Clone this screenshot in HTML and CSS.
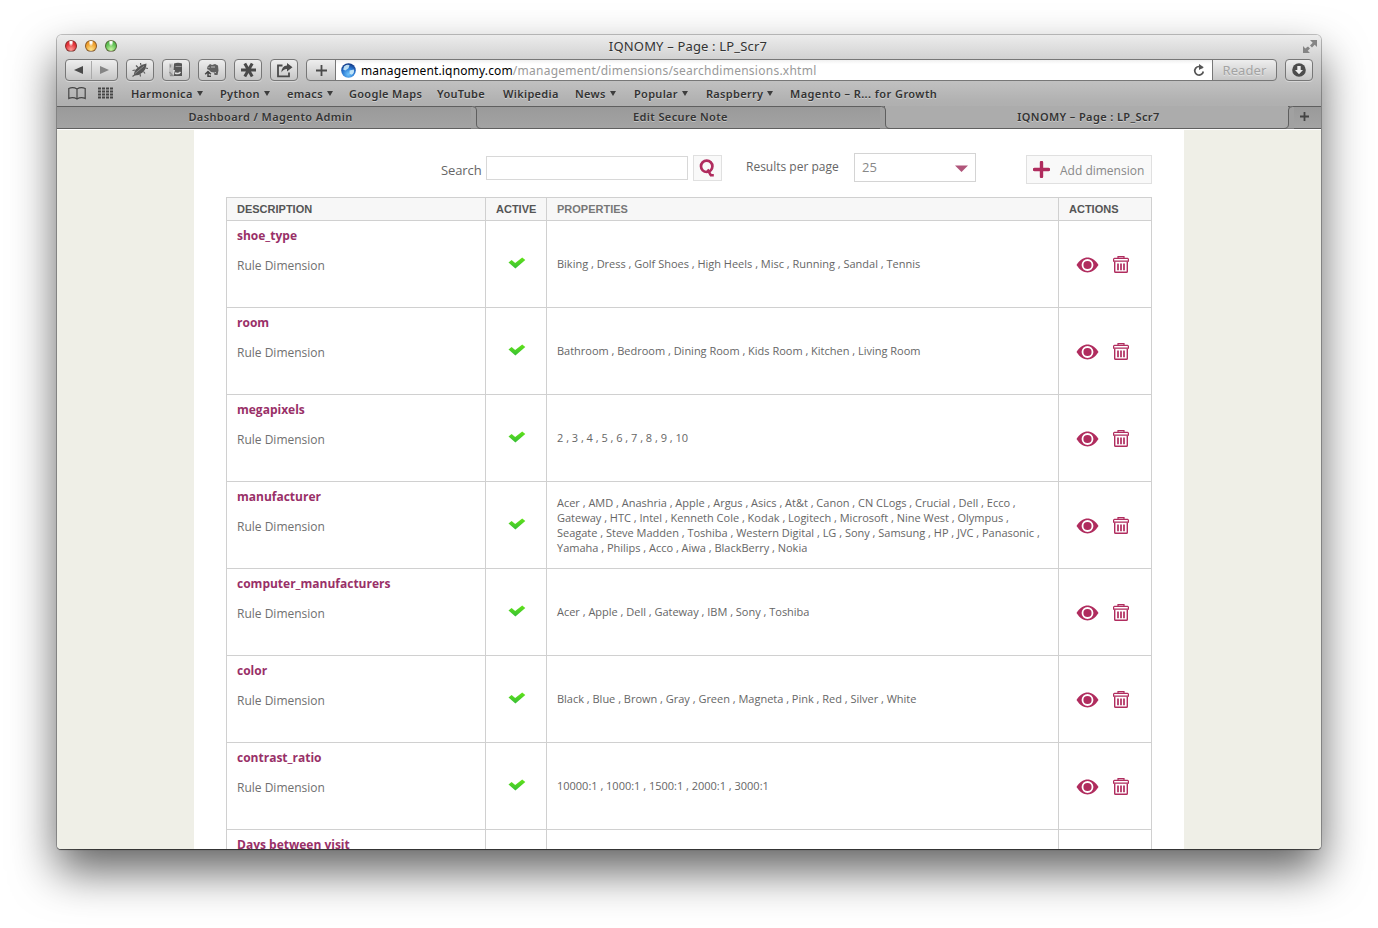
FILE: index.html
```
<!DOCTYPE html>
<html lang="en">
<head>
<meta charset="utf-8">
<title>IQNOMY – Page : LP_Scr7</title>
<link rel="stylesheet" href="styles.css">
</head>
<body>
<svg class="defs" width="0" height="0">
  <defs>
    <linearGradient id="tick-fill" x1="0" y1="0" x2="0" y2="1"><stop offset="0" stop-color="#62e417"/><stop offset="1" stop-color="#36bd38"/></linearGradient>
    <radialGradient id="globe-fill" cx=".5" cy=".75" r=".7"><stop offset="0" stop-color="#6fc4fb"/><stop offset=".6" stop-color="#2a78d2"/><stop offset="1" stop-color="#123b8a"/></radialGradient>
  </defs>
  <symbol id="tick" viewBox="0 0 18 12"><path d="M.5 5.6 3.6 3 7.2 6 14.2.6 17.3 3 7.4 11.6Z" fill="url(#tick-fill)"/></symbol>
  <symbol id="eye" viewBox="0 0 23 16"><path d="M.5 8C4 2.6 7.6.6 11.5.6S19 2.6 22.5 8C19 13.4 15.4 15.4 11.5 15.4S4 13.4.5 8Z" fill="#b02c5e"/><circle cx="11.5" cy="8" r="5" fill="none" stroke="#fff" stroke-width="1.8"/></symbol>
  <symbol id="bin" viewBox="0 0 16 17"><g fill="none" stroke="#b02c5e"><path d="M5 2.2V.7h6v1.5M.6 5.2V3.1L1.5 2.4h13l.9.7v2.1Z" stroke-width="1.2"/><path d="M1.7 5.4V15.4q0 .9.9.9h10.800q.9 0 .9-.9V5.4" stroke-width="1.4"/><path d="M5 7.500v6.700M8 7.500v6.700M11 7.500v6.700" stroke-width="1.700"/></g></symbol>
  <symbol id="edge" viewBox="0 0 12 23"><path d="M0 0H2Q5.500 0 5.500 4V18Q5.500 22.500 10 22.500H0Z" fill="#a1a1a1"/><path d="M0 .5H1.500Q5.500.5 5.500 4V18Q5.500 22.500 10 22.500" fill="none" stroke="#5f5f5f"/></symbol>
</svg>
<div class="window">
  <header class="chrome">
    <div class="titlebar">
      <div class="lights"><i class="light red"></i><i class="light amber"></i><i class="light green"></i></div>
      <div class="title">IQNOMY – Page : LP_Scr7</div>
      <svg class="full" width="16" height="15" viewBox="0 0 16 15" fill="#858585"><path d="M8 1h7v7l-2.300-2.300-2.700 2.700-2-2 2.700-2.700ZM1 14h7L5.700 11.700 8 9.400 6 7.400 3.300 9.600 1 7Z"/></svg>
    </div>
    <div class="toolbar">
      <div class="btn nav"><span><svg width="9" height="8" viewBox="0 0 9 8"><path d="M9 0v8L0 4Z" fill="#4a4a4a"/></svg></span><span><svg width="9" height="8" viewBox="0 0 9 8"><path d="M0 0v8l9-4Z" fill="#858585"/></svg></span></div>
      <div class="btn"><svg width="18" height="16" viewBox="0 0 18 16"><path d="M3 13.500Q2.500 9 7 5.500 11 2 15.500 1.500 15.500 7 11.500 10.500 7.500 14 3 13.500Z" fill="#565656"/><path d="M4.500 8 1.500 8.500M7 5.500 5 3.500M10 3.500 9.500 1M14.500 6l2.500.5M12.500 9.500l1.500 2M9 12l.5 2.500M3.500 13l-2 1.500" stroke="#5c5c5c" stroke-width="1.200"/><path d="M4 11.500 13 4" stroke="#8a8a8a"/></svg></div>
      <div class="btn"><svg width="16" height="16" viewBox="0 0 16 16"><path d="M6 1.500Q10 0 14 1.500V14H5.500L7 8H5.500Z" fill="#555"/><path d="M7.500 4.500h6" stroke="#999" stroke-width="1.200"/><path d="M7 11q3.500 1.500 5.500-1" stroke="#ddd" fill="none" stroke-width="1.400"/><path d="M2.500 2.500v3M1.500 10l3 3.500H2" stroke="#8a8a8a" stroke-width="1.400" fill="none"/><path d="M1 1.500h4v12H1Z" fill="#999" opacity=".35"/></svg></div>
      <div class="btn"><svg width="16" height="16" viewBox="0 0 16 16"><path d="M3.500 4.500 6 2l2 1 3-1 3 1.500.5 5-1 4.500h-3l-.5-2.500-3-.5L5 8 3 7Z" fill="#606060"/><path d="M7 5h4M10.500 10.500h1.500M5 5v1" stroke="#bbb"/><path d="M4 15V10M1.200 12.300 4 9.500l2.800 2.800M4 14.300h3" stroke="#444" stroke-width="1.500" fill="none"/></svg></div>
      <div class="btn"><svg width="17" height="16" viewBox="0 0 17 16"><path d="M1 8h15M4.800 1.500l7.400 13M12.200 1.500l-7.400 13" stroke="#4a4a4a" stroke-width="3"/></svg></div>
      <div class="btn"><svg width="17" height="15" viewBox="0 0 17 15"><path d="M6.500 2.500H2v10.800h11V9.500" fill="none" stroke="#4a4a4a" stroke-width="1.800"/><path d="M11 0l5.500 4.200L11 8.400V6Q7 6 5.500 9.500 5.500 3 11 2.600Z" fill="#4a4a4a"/></svg></div>
      <div class="address">
        <div class="add"><svg width="11" height="11"><path d="M5.500 0v11M0 5.500h11" stroke="#4a4a4a" stroke-width="1.800"/></svg></div>
        <div class="url"><svg width="15" height="15" viewBox="0 0 14 14"><circle cx="7" cy="7" r="6.800" fill="url(#globe-fill)"/><path d="M3 3q3-2 5-1L7 5 4 7 2 6ZM8 7l4-1q1 3-2 5L8 10Z" fill="#d4f1fc" opacity=".85"/></svg><span class="host">management.iqnomy.com</span><span class="path">/management/dimensions/searchdimensions.xhtml</span>
          <svg class="reload" width="12" height="13" viewBox="0 0 12 13"><path d="M9.500 4.200A4.300 4.300 0 1 0 10.300 7.500" fill="none" stroke="#555" stroke-width="1.700"/><path d="M6 0l4.800 3.200L6 6Z" fill="#555"/></svg></div>
        <div class="reader">Reader</div>
      </div>
      <div class="btn down"><svg width="14" height="14" viewBox="0 0 14 14"><circle cx="7" cy="7" r="6.800" fill="#4d4d4d"/><path d="M5.300 3h3.400v4H11l-4 4.300L3 7h2.300Z" fill="#eee"/></svg></div>
    </div>
    <nav class="bookmarks">
      <svg width="18" height="13" viewBox="0 0 18 13"><path d="M9 2Q5-.5.800 1.500V11.500Q5 9.500 9 12 13 9.500 17.200 11.500V1.500Q13-.5 9 2V12" fill="none" stroke="#454545" stroke-width="1.200"/></svg>
      <svg class="apps" width="16" height="12" viewBox="0 0 16 12"><path d="M0 1.500h16M0 4.500h16M0 7.500h16M0 10.500h16" stroke="#454545" stroke-width="2" stroke-dasharray="3 1"/></svg>
      <span class="more">Harmonica</span><span class="more">Python</span><span class="more">emacs</span><span>Google Maps</span><span>YouTube</span><span>Wikipedia</span><span class="more">News</span><span class="more">Popular</span><span class="more">Raspberry</span><span class="wide">Magento – R... for Growth</span>
    </nav>
    <div class="tabs">
      <div class="tab t1">Dashboard / Magento Admin<svg class="edge" width="12" height="23"><use href="#edge"/></svg></div>
      <div class="tab">Edit Secure Note<svg class="edge" width="12" height="23"><use href="#edge"/></svg></div>
      <div class="tab active">IQNOMY – Page : LP_Scr7</div>
      <div class="tab plus"><svg class="edge flip" width="12" height="23"><use href="#edge"/></svg><svg width="9" height="9"><path d="M4.500 0v9M0 4.500h9" stroke="#444" stroke-width="1.800"/></svg></div>
    </div>
  </header>
  <main class="page">
    <div class="sheet">
      <div class="controls">
        <label class="search-label">Search</label><div class="field"></div>
        <div class="go"><svg width="16" height="18" viewBox="0 0 16 18"><circle cx="7.700" cy="7.300" r="5.700" fill="none" stroke="#b02c5e" stroke-width="2.700"/><path d="M8.500 10.500l3.300 5.700h3" fill="none" stroke="#b02c5e" stroke-width="2.500"/></svg></div>
        <span class="per">Results per page</span>
        <div class="select">25<svg width="13" height="7"><path d="M0 .5h13L6.500 7Z" fill="#b0557a"/></svg></div>
        <div class="new"><svg width="17" height="17"><path d="M8.500 1.500v14M1.500 8.500h14" stroke="#b02c5e" stroke-width="3.400" stroke-linecap="round"/></svg><span>Add dimension</span></div>
      </div>
      <div class="table">
        <div class="row head"><div>DESCRIPTION</div><div>ACTIVE</div><div class="soft">PROPERTIES</div><div>ACTIONS</div></div>
        <div class="row"><div class="desc"><b>shoe_type</b><p>Rule Dimension</p></div><div class="on"><svg width="18" height="12"><use href="#tick"/></svg></div><div class="props"><p>Biking , Dress , Golf Shoes , High Heels , Misc , Running , Sandal , Tennis</p></div><div class="acts"><svg width="23" height="16"><use href="#eye"/></svg><svg width="16" height="17"><use href="#bin"/></svg></div></div>
        <div class="row"><div class="desc"><b>room</b><p>Rule Dimension</p></div><div class="on"><svg width="18" height="12"><use href="#tick"/></svg></div><div class="props"><p>Bathroom , Bedroom , Dining Room , Kids Room , Kitchen , Living Room</p></div><div class="acts"><svg width="23" height="16"><use href="#eye"/></svg><svg width="16" height="17"><use href="#bin"/></svg></div></div>
        <div class="row"><div class="desc"><b>megapixels</b><p>Rule Dimension</p></div><div class="on"><svg width="18" height="12"><use href="#tick"/></svg></div><div class="props"><p>2 , 3 , 4 , 5 , 6 , 7 , 8 , 9 , 10</p></div><div class="acts"><svg width="23" height="16"><use href="#eye"/></svg><svg width="16" height="17"><use href="#bin"/></svg></div></div>
        <div class="row"><div class="desc"><b>manufacturer</b><p>Rule Dimension</p></div><div class="on"><svg width="18" height="12"><use href="#tick"/></svg></div><div class="props"><p>Acer , AMD , Anashria , Apple , Argus , Asics , At&amp;t , Canon , CN CLogs , Crucial , Dell , Ecco ,<br>Gateway , HTC , Intel , Kenneth Cole , Kodak , Logitech , Microsoft , Nine West , Olympus ,<br>Seagate , Steve Madden , Toshiba , Western Digital , LG , Sony , Samsung , HP , JVC , Panasonic ,<br>Yamaha , Philips , Acco , Aiwa , BlackBerry , Nokia</p></div><div class="acts"><svg width="23" height="16"><use href="#eye"/></svg><svg width="16" height="17"><use href="#bin"/></svg></div></div>
        <div class="row"><div class="desc"><b>computer_manufacturers</b><p>Rule Dimension</p></div><div class="on"><svg width="18" height="12"><use href="#tick"/></svg></div><div class="props"><p>Acer , Apple , Dell , Gateway , IBM , Sony , Toshiba</p></div><div class="acts"><svg width="23" height="16"><use href="#eye"/></svg><svg width="16" height="17"><use href="#bin"/></svg></div></div>
        <div class="row"><div class="desc"><b>color</b><p>Rule Dimension</p></div><div class="on"><svg width="18" height="12"><use href="#tick"/></svg></div><div class="props"><p>Black , Blue , Brown , Gray , Green , Magneta , Pink , Red , Silver , White</p></div><div class="acts"><svg width="23" height="16"><use href="#eye"/></svg><svg width="16" height="17"><use href="#bin"/></svg></div></div>
        <div class="row"><div class="desc"><b>contrast_ratio</b><p>Rule Dimension</p></div><div class="on"><svg width="18" height="12"><use href="#tick"/></svg></div><div class="props"><p>10000:1 , 1000:1 , 1500:1 , 2000:1 , 3000:1</p></div><div class="acts"><svg width="23" height="16"><use href="#eye"/></svg><svg width="16" height="17"><use href="#bin"/></svg></div></div>
        <div class="row last"><div class="desc"><b>Days between visit</b></div><div></div><div></div><div></div></div>
      </div>
    </div>
  </main>
</div>
</body>
</html>
```
FILE: styles.css
```
* { box-sizing: border-box; }
body { margin: 0; height: 928px; padding: 35px 57px 0; overflow: hidden; background: #fff; font-family: "Open Sans", sans-serif; }
svg { display: block; flex: none; }
p { margin: 0; }
.defs { position: absolute; }
.window { width: 1264px; height: 814px; border-radius: 5px 5px 4px 4px; overflow: hidden; display: flex; flex-direction: column; box-shadow: 0 0 0 1px rgba(0,0,0,.22), 0 1px 1px rgba(0,0,0,.5), 0 22px 45px rgba(0,0,0,.62); }

.chrome { height: 94px; flex: none; background: linear-gradient(#ececec 0, #d2d2d2 24px, #b1b1b1 66px, #a9a9a9 94px); color: #333; font-family: "Noto Sans", sans-serif; text-shadow: 0 1px 0 rgba(255,255,255,.4); }
.titlebar { height: 24px; display: flex; align-items: center; justify-content: space-between; padding: 0 3px 2px 8px; }
.lights { display: flex; gap: 8px; width: 60px; }
.light { width: 12px; height: 12px; border-radius: 50%; border: 1px solid rgba(60,30,20,.55); }
.red { background: radial-gradient(ellipse at 50% 10%, #fff 0 12%, transparent 35%), radial-gradient(circle at 50% 85%, #ff9c96, #e2333a 60%); }
.amber { background: radial-gradient(ellipse at 50% 10%, #fff 0 12%, transparent 35%), radial-gradient(circle at 50% 85%, #ffe48c, #eea030 60%); }
.green { background: radial-gradient(ellipse at 50% 10%, #fff 0 12%, transparent 35%), radial-gradient(circle at 50% 85%, #c5f5a0, #5fc054 60%); }
.title { font-size: 13px; line-height: 20px; padding-right: 7px; letter-spacing: .17px; }
.full { margin-left: 44px; }

.toolbar { height: 23px; display: flex; padding: 0 8px; gap: 8px; align-items: flex-start; }
.btn { width: 28px; height: 22px; border: 1px solid #777; border-radius: 4px; background: linear-gradient(#eee, #c6c6c6); display: flex; align-items: center; justify-content: center; box-shadow: 0 1px 0 rgba(255,255,255,.35); }
.nav { width: 53px; }
.nav span { flex: 1; height: 18px; display: flex; align-items: center; justify-content: center; }
.nav span + span { border-left: 1px solid #aaa; }
.address { flex: 1; height: 22px; border: 1px solid #777; border-radius: 4px; display: flex; background: linear-gradient(#eee, #c6c6c6); overflow: hidden; }
.add { width: 29px; display: flex; align-items: center; justify-content: center; border-right: 1px solid #777; }
.url { flex: 1; display: flex; align-items: center; padding: 0 7px 0 5px; background: linear-gradient(#f0f0f0, #fff 4px); font-size: 12px; text-shadow: none; }
.host { color: #000; margin-left: 5px; letter-spacing: .15px; }
.path { color: #999; letter-spacing: .25px; }
.reload { margin-left: auto; }
.reader { width: 64px; border-left: 1px solid #777; text-align: center; font-size: 13px; line-height: 20px; color: #a3a3a3; letter-spacing: .1px; }

.bookmarks { height: 23px; padding: 0 0 1px 11px; display: grid; grid-template-columns: 30px 33px 89px 67px 62px 88px 66px 72px 59px 72px 84px 1fr; align-items: center; font-size: 11px; font-weight: 600; white-space: nowrap; letter-spacing: .3px; }
.apps { margin-top: -1px; }
.wide { letter-spacing: .42px; }
.more::after { content: ""; display: inline-block; margin-left: 4px; vertical-align: 2px; border: 3.5px solid transparent; border-top: 5px solid #3d3d3d; border-bottom: 0; }

.tabs { height: 23px; margin-top: 1px; display: grid; grid-template-columns: 419px 409px 403px 33px; font-size: 11px; font-weight: 600; letter-spacing: .38px; border-bottom: 1px solid #5f5f5f; }
.tab { position: relative; height: 22px; padding-bottom: 2px; display: flex; align-items: center; justify-content: center; background: linear-gradient(#9a9a9a, #a3a3a3); border-top: 1px solid #5f5f5f; }
.t1 { padding-left: 8px; }
.active { background: #acacac; border-top: 0; padding: 0 0 1px 4px; }
.edge { position: absolute; top: -1px; right: -7px; z-index: 1; }
.flip { right: auto; left: -6px; transform: scaleX(-1); }

.page { flex: 1; min-height: 0; overflow: hidden; display: flex; justify-content: center; background: #efefe7; border-top: 1px solid #fff; }
.sheet { width: 990px; background: #fff; padding: 23px 32px 0; color: #666; }
.controls { display: flex; height: 44px; font-size: 13px; align-items: flex-start; white-space: nowrap; }
.search-label { width: 45px; margin-left: 215px; line-height: 34px; letter-spacing: -.1px; }
.field { width: 202px; height: 24px; margin-top: 3px; border: 1px solid #d8d8d8; }
.go { width: 29px; height: 26px; margin: 2px 0 0 5px; padding: 0 1px 1px 0; border: 1px solid #e0e0e0; background: #f9f9f9; display: flex; align-items: center; justify-content: center; }
.per { width: 108px; margin-left: 24px; font-size: 12px; line-height: 28px; }
.select { width: 122px; height: 29px; border: 1px solid #d4d4d4; padding: 0 7px 1px; display: flex; align-items: center; justify-content: space-between; color: #888; }
.select svg { margin-top: 2px; }
.new { margin: 2px 0 0 auto; width: 126px; height: 29px; border: 1px solid #e0e0e0; background: #f9f9f9; display: flex; align-items: center; padding-left: 6px; gap: 10px; color: #888; font-size: 12px; }
.new span { padding-top: 2px; }

.table { border-left: 1px solid #d0d0d0; border-top: 1px solid #d0d0d0; }
.row { display: grid; grid-template-columns: 259px 61px 512px 93px; height: 87px; }
.row > div { border-right: 1px solid #d0d0d0; border-bottom: 1px solid #d0d0d0; }
.head { height: 23px; background: #f7f7f7; font: bold 11px/22px "Liberation Sans", Arial, sans-serif; color: #555; }
.head > div { padding-left: 10px; }
.head .soft { color: #777; }
.desc { padding: 6px 0 0 10px; font-size: 12px; line-height: 18px; }
.desc b { display: block; color: #993068; }
.desc p { margin-top: 12px; font-size: 12px; color: #707070; }
.on { display: flex; align-items: center; justify-content: center; padding: 0 0 3px 1px; }
.props { display: flex; align-items: center; padding: 0 0 1px 10px; font-size: 11px; line-height: 15px; white-space: nowrap; letter-spacing: -.01px; }
.acts { display: flex; align-items: center; padding: 1px 0 0 17px; gap: 14px; }
```
